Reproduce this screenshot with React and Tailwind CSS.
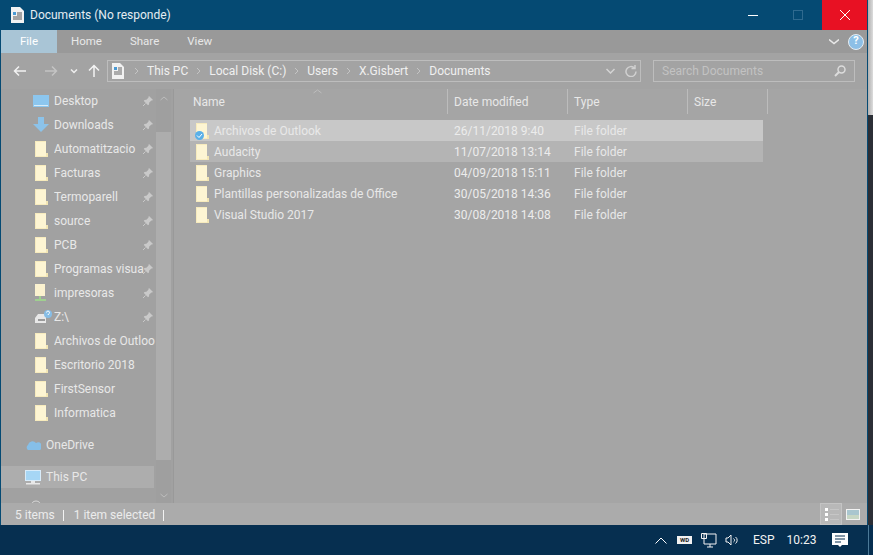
import React from "react";

const FONT = "font-['Roboto',sans-serif]";

const Folder = ({ className = "" }) => (
  <svg width="13" height="16" viewBox="0 0 13 16" className={className}>
    <path d="M0 0h11v16H0z" fill="#f7ebbd" />
    <path d="M1 1h10v14H1z" fill="#fdf5d3" />
    <path d="M11 12h2v4h-2z" fill="#f3e6b4" />
  </svg>
);

const Pin = () => (
  <svg width="12" height="12" viewBox="0 0 12 12">
    <path d="M7 1l4 4-1 .6-.6-.2L7.200 7.600l-.2 2-1 .6L1.800 6l.6-1 2-.2 2.200-2.200-.2-.6z" fill="#c9c9c9" />
    <path d="M3.500 8.500L1 11" stroke="#c9c9c9" fill="none" />
  </svg>
);

const navItems = [
  { label: "Desktop", icon: "desktop", pin: true },
  { label: "Downloads", icon: "down", pin: true },
  { label: "Automatitzacio", pin: true },
  { label: "Facturas", pin: true },
  { label: "Termoparell", pin: true },
  { label: "source", pin: true },
  { label: "PCB", pin: true },
  { label: "Programas visua", pin: true },
  { label: "impresoras", icon: "net", pin: true },
  { label: "Z:\\", icon: "drive", pin: true },
  { label: "Archivos de Outloo" },
  { label: "Escritorio 2018" },
  { label: "FirstSensor" },
  { label: "Informatica" },
];

const files = [
  { name: "Archivos de Outlook", date: "26/11/2018 9:40", bg: "bg-[#c8c8c8]", sync: true },
  { name: "Audacity", date: "11/07/2018 13:14", bg: "bg-[#b4b4b4]" },
  { name: "Graphics", date: "04/09/2018 15:11" },
  { name: "Plantillas personalizadas de Office", date: "30/05/2018 14:36" },
  { name: "Visual Studio 2017", date: "30/08/2018 14:08" },
];

function NavIcon({ type }) {
  if (type === "desktop")
    return (
      <svg width="16" height="12" viewBox="0 0 16 12" className="ml-[-2px]">
        <path d="M0 0h16v12H0z" fill="#8cc6ee" />
        <path d="M1 10h14v1H1z" fill="#d8ecf8" />
      </svg>
    );
  if (type === "down")
    return (
      <svg width="16" height="16" viewBox="0 0 16 16" className="ml-[-2px]">
        <path d="M5 0h6v7h5l-8 8-8-8h5z" fill="#8cc3ea" />
      </svg>
    );
  if (type === "net")
    return (
      <svg width="14" height="18" viewBox="0 0 14 18">
        <path d="M0 0h10v12H0z" fill="#fbf2cf" />
        <path d="M5 12v3M0 16h11" stroke="#9fd08f" strokeWidth="2" fill="none" />
      </svg>
    );
  if (type === "drive")
    return (
      <svg width="18" height="16" viewBox="0 0 18 16" className="ml-[-1px]">
        <path d="M1 9l3-4h8v9H1z" fill="#e8e8e8" />
        <path d="M4 10h7v2H4z" fill="#9a9a9a" />
        <circle cx="14" cy="5" r="4" fill="#86bde6" />
        <path d="M12.500 3.500a1.500 1.500 0 1 1 2 1.500l-.5 1" stroke="#fff" fill="none" />
      </svg>
    );
  return <Folder />;
}

function NavRow({ item }) {
  return (
    <div className="relative flex h-6 items-center pl-[34px]">
      <span className="flex w-[19px] shrink-0 items-center">
        <NavIcon type={item.icon} />
      </span>
      <span className="w-[102px] overflow-hidden whitespace-nowrap text-[12px] text-[#e8e8e8]">{item.label}</span>
      {item.pin && (
        <span className="absolute left-[141px] top-[6px]">
          <Pin />
        </span>
      )}
    </div>
  );
}

export default function App() {
  return (
    <div className={`${FONT} flex h-[555px] w-[873px] flex-col overflow-hidden bg-[#062f50]`}>
      <div className="flex min-h-0 flex-1">
        <div className="flex w-[868px] flex-col border-x border-[#054a73] bg-[#a3a3a3]">
          {/* title bar */}
          <div className="flex h-[30px] items-center bg-[#054a73]">
            <svg width="13" height="16" viewBox="0 0 13 16" className="ml-[10px]">
              <path d="M0 0h9l4 4v12H0z" fill="#f2f2f2" />
              <path d="M2 5h3v3H2z" fill="#4a9ad4" />
              <path d="M6 6h5M6 8h5M2 10h9M2 12h9" stroke="#555" fill="none" />
            </svg>
            <span className="ml-[6px] text-[12px] text-[#e6edf2]">Documents (No responde)</span>
            <div className="ml-auto flex h-full items-center">
              <span className="mr-[35px] h-px w-[10px] bg-white" />
              <span className="mr-[19px] h-[10px] w-[10px] border border-[#2f6a8f]" />
              <span className="flex h-full w-[45px] items-center justify-center bg-[#e81123]">
                <svg width="10" height="10" viewBox="0 0 10 10">
                  <path d="M0 0l10 10M10 0L0 10" stroke="#fff" fill="none" />
                </svg>
              </span>
            </div>
          </div>
          {/* ribbon tabs */}
          <div className="flex h-[23px] items-center bg-[#999999] text-[11.5px] text-[#e8e8e8]">
            <span className="flex h-full w-[56px] items-center justify-center bg-[#a9c5d6] text-white">File</span>
            <span className="ml-[14px]">Home</span>
            <span className="ml-[28px]">Share</span>
            <span className="ml-[28px]">View</span>
            <svg width="10" height="6" viewBox="0 0 10 6" className="ml-auto mr-[9px]">
              <path d="M0 .5l5 4 5-4" stroke="#e8e8e8" strokeWidth="1.500" fill="none" />
            </svg>
            <span className="mr-[3px] flex h-4 w-4 items-center justify-center rounded-full border border-[#e6eef4] bg-[#8dbfe6] text-[11px] font-bold text-white">?</span>
          </div>
          {/* address row */}
          <div className="flex h-[36px] items-center bg-[#a3a3a3]">
            <svg width="14" height="12" viewBox="0 0 14 12" className="ml-[12px]">
              <path d="M13 6H2M6 1.500L1.500 6 6 10.500" stroke="#f2f2f2" strokeWidth="1.500" fill="none" />
            </svg>
            <svg width="14" height="12" viewBox="0 0 14 12" className="ml-[17px]">
              <path d="M1 6h11M8 1.500L12.500 6 8 10.500" stroke="#c4c4c4" strokeWidth="1.500" fill="none" />
            </svg>
            <svg width="8" height="5" viewBox="0 0 8 5" className="ml-[12px]">
              <path d="M1 .5l3 3 3-3" stroke="#eeeeee" strokeWidth="1.500" fill="none" />
            </svg>
            <svg width="12" height="14" viewBox="0 0 12 14" className="ml-[10px]">
              <path d="M6 13V2M1 6.500L6 1.500l5 5" stroke="#f4f4f4" strokeWidth="1.500" fill="none" />
            </svg>
            <div className="ml-[7px] flex h-[22px] w-[534px] items-center border border-[#bdbdbd] text-[12px] text-[#f0f0f0]">
              <svg width="12" height="16" viewBox="0 0 12 16" className="ml-[4px] mr-[2px]">
                <path d="M0 0h8l4 4v12H0z" fill="#f2f2f2" />
                <path d="M2 4h3v3H2z" fill="#4a9ad4" />
                <path d="M6 5h4M6 7h4M2 9h8M2 11h8" stroke="#666" fill="none" />
              </svg>
              {["This PC", "Local Disk (C:)", "Users", "X.Gisbert", "Documents"].map((c) => (
                <span key={c} className="flex items-center">
                  <svg width="5" height="8" viewBox="0 0 5 8" className="mx-[8px]">
                    <path d="M1 1l3 3-3 3" stroke="#c4c4c4" fill="none" />
                  </svg>
                  {c}
                </span>
              ))}
              <svg width="9" height="6" viewBox="0 0 9 6" className="ml-auto mr-[10px]">
                <path d="M.5 1l4 4 4-4" stroke="#d4d4d4" strokeWidth="1.500" fill="none" />
              </svg>
              <svg width="12" height="12" viewBox="0 0 12 12" className="mr-[3px]">
                <path d="M9.500 3A5 5 0 1 0 11 6.500M10 0v3.500H6.500" stroke="#d0d0d0" strokeWidth="1.500" fill="none" />
              </svg>
            </div>
            <div className="ml-[12px] flex h-[22px] w-[202px] items-center justify-between border border-[#bdbdbd] pl-[8px] pr-[8px] text-[12px] text-[#c2c2c2]">
              Search Documents
              <svg width="12" height="12" viewBox="0 0 12 12">
                <circle cx="7.500" cy="4.500" r="3.500" stroke="#dcdcdc" strokeWidth="1.500" fill="none" />
                <path d="M5 7l-4 4" stroke="#dcdcdc" strokeWidth="2" fill="none" />
              </svg>
            </div>
          </div>
          {/* main */}
          <div className="flex min-h-0 flex-1">
            <div className="relative w-[173px] shrink-0 overflow-hidden border-r border-[#999999] bg-[#a1a1a1]">
              {navItems.map((item) => (
                <NavRow key={item.label} item={item} />
              ))}
              <div className="mt-2 flex h-6 items-center pl-[24px]">
                <svg width="16" height="11" viewBox="0 0 16 11" className="mr-[5px]">
                  <path d="M3 10a3 3 0 0 1 0-5 4.500 4.500 0 0 1 8-2 3.500 3.500 0 0 1 4 7z" fill="#86bfe8" />
                </svg>
                <span className="text-[12px] text-[#e8e8e8]">OneDrive</span>
              </div>
              <div className="mb-px mt-[9px] flex h-[22px] w-[153px] items-center bg-[#adadad] pl-[24px]">
                <svg width="16" height="15" viewBox="0 0 16 15" className="mr-[5px]">
                  <path d="M0 0h16v11H0z" fill="#d9ecfa" />
                  <path d="M1 1h14v9H1z" fill="#a6d6f5" />
                  <path d="M6 11h4v2H6zM1 13h14v1.500H1z" fill="#e8e8e8" />
                </svg>
                <span className="text-[12px] text-[#e8e8e8]">This PC</span>
              </div>
              <div className="mt-[12px] pl-[29px]">
                <svg width="12" height="12" viewBox="0 0 12 12">
                  <circle cx="6" cy="6" r="5" stroke="#d8d8d8" fill="none" />
                </svg>
              </div>
              {/* nav scrollbar */}
              <div className="absolute right-[2px] top-0 flex h-full w-[15px] flex-col items-center bg-[#9f9f9f]">
                <svg width="8" height="5" viewBox="0 0 8 5" className="mt-[7px]">
                  <path d="M.5 4L4 1l3.500 3" stroke="#bdbdbd" fill="none" />
                </svg>
                <div className="mt-[31px] h-[328px] w-full shrink-0 bg-[#adadad]" />
                <svg width="8" height="5" viewBox="0 0 8 5" className="mt-[33px]">
                  <path d="M.5 1L4 4l3.500-3" stroke="#bdbdbd" fill="none" />
                </svg>
              </div>
            </div>
            <div className="relative min-w-0 flex-1 bg-[#a5a5a5]">
              <svg width="9" height="5" viewBox="0 0 9 5" className="absolute left-[139px] top-0">
                <path d="M.5 4L4.500 1l4 3" stroke="#bdbdbd" fill="none" />
              </svg>
              <div className="flex h-[30px] items-start text-[12px] text-[#e8e8e8]">
                <span className="flex h-[25px] w-[274px] items-center border-r border-[#bcbcbc] pl-[19px]">Name</span>
                <span className="flex h-[25px] w-[120px] items-center border-r border-[#bcbcbc] pl-[6px]">Date modified</span>
                <span className="flex h-[25px] w-[120px] items-center border-r border-[#bcbcbc] pl-[6px]">Type</span>
                <span className="flex h-[25px] w-[80px] items-center border-r border-[#bcbcbc] pl-[6px]">Size</span>
              </div>
              <div className="mt-[1px] w-[589px] pl-[16px]">
                {files.map((f) => (
                  <div key={f.name} className={`flex h-[21px] items-center text-[12px] text-[#e8e8e8] ${f.bg || ""}`}>
                    <span className="relative flex w-[24px] shrink-0 pl-[6px]">
                      <Folder />
                      {f.sync && (
                        <svg width="9" height="9" viewBox="0 0 9 9" className="absolute left-[5px] top-[8px]">
                          <circle cx="4.500" cy="4.500" r="4.500" fill="#5ab0e8" />
                          <path d="M2 4.500l2 2 3-3.500" stroke="#fff" fill="none" />
                        </svg>
                      )}
                    </span>
                    <span className="w-[240px] shrink-0 whitespace-nowrap">{f.name}</span>
                    <span className="w-[120px] shrink-0 whitespace-nowrap text-[#ececec]">{f.date}</span>
                    <span className="whitespace-nowrap">File folder</span>
                  </div>
                ))}
              </div>
            </div>
          </div>
          {/* status bar */}
          <div className="flex h-[22px] items-center bg-[#ababab] text-[12px] text-[#ececec]">
            <span className="ml-[14px] pt-[2px]">5 items</span>
            <span className="ml-[8px] mt-[2px] h-[11px] w-px bg-[#f2f2f2]" />
            <span className="ml-[10px] pt-[2px]">1 item selected</span>
            <span className="ml-[8px] mt-[2px] h-[11px] w-px bg-[#f2f2f2]" />
            <div className="ml-auto mr-[7px] flex h-full items-center">
              <span className="flex h-full w-[22px] flex-col justify-center gap-[2px] border border-[#c4c4c4] bg-[#b8b8b8] pl-[4px]">
                {[0, 1, 2].map((i) => (
                  <span key={i} className="flex items-center gap-[2px]">
                    <span className="h-[3px] w-[3px] bg-white" />
                    <span className="h-px w-[9px] bg-[#c6c6c6]" />
                  </span>
                ))}
              </span>
              <svg width="14" height="11" viewBox="0 0 14 11" className="ml-[4px]">
                <path d="M0 0h14v11H0z" fill="#f2f2f2" />
                <path d="M1 1h12v9H1z" fill="#a9c6cf" />
                <path d="M1 6h12v4H1z" fill="#c6d6c4" />
              </svg>
            </div>
          </div>
        </div>
        {/* desktop behind the window */}
        <div className="flex flex-1 flex-col">
          <div className="h-[115px] bg-gradient-to-r from-[#b0b0b0] to-[#dcdcdc]" />
          <div className="flex-1 bg-[#2b2f36]" />
        </div>
      </div>
      {/* taskbar */}
      <div className="flex h-[30px] shrink-0 items-center bg-[#062f50] text-[12px] text-[#f2f2f2]">
        <svg width="12" height="7" viewBox="0 0 12 7" className="ml-[655px]">
          <path d="M.5 6.500L6 1l5.500 5.500" stroke="#fff" fill="none" />
        </svg>
        <span className="ml-[10px] flex h-[8px] w-[15px] items-center justify-center bg-[#f2f2f2] text-[6px] font-bold leading-none text-[#222]">WD</span>
        <svg width="16" height="15" viewBox="0 0 16 15" className="ml-[9px]">
          <path d="M3 1h12v10H3zM9 11v3M6 14h6M.5 .5h5v5h-5z" stroke="#f2f2f2" fill="#062f50" />
        </svg>
        <svg width="16" height="13" viewBox="0 0 16 13" className="ml-[8px]">
          <path d="M1 4v4h2l3 3V1L3 4zM8.500 4.500a2 2 0 0 1 0 3.500M10.500 3a4 4 0 0 1 0 6.500" stroke="#f2f2f2" fill="none" />
        </svg>
        <span className="ml-[12px]">ESP</span>
        <span className="ml-[12px]">10:23</span>
        <svg width="16" height="15" viewBox="0 0 16 15" className="ml-[16px]">
          <path d="M0 0h16v12h-6l-2 2-2-2H0z" fill="#fff" />
          <path d="M3 3h10M3 6h10M3 9h6" stroke="#062f50" fill="none" />
        </svg>
        <span className="ml-auto mr-[4px] h-full w-px bg-[#4c7a98]" />
      </div>
    </div>
  );
}
